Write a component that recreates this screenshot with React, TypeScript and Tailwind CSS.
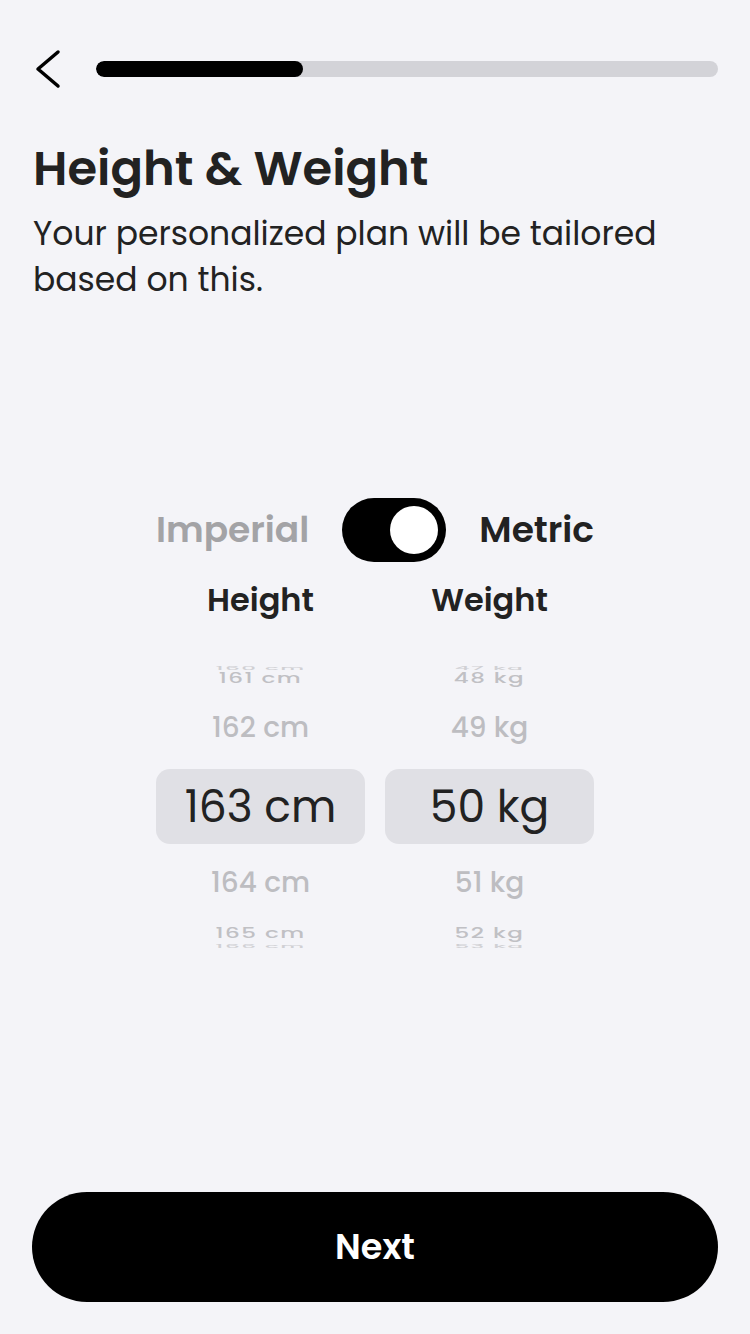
import React from "react";

const font = { fontFamily: "Poppins, 'Open Sans', sans-serif" };

function Wheel({ items }: { items: string[] }) {
  // items: [p0, r1, r2, sel, r4, r5, p6]
  return (
    <div className="flex w-[209px] flex-col items-stretch">
      <div className="flex h-[10px] items-end justify-center overflow-hidden">
        <span className="h-[4px] overflow-hidden">
          <span className="block scale-y-[0.2] text-[23px] font-medium leading-[4px] tracking-[1.5px] text-[#d0d0d4]">{items[0]}</span>
        </span>
      </div>
      <div className="flex h-[17px] items-center justify-center overflow-hidden">
        <span className="scale-y-[0.6] text-[23px] font-medium leading-none tracking-[1.5px] text-[#c0c0c4]">{items[1]}</span>
      </div>
      <div className="flex h-[82px] items-center justify-center">
        <span className="text-[28px] font-medium leading-none text-[#bdbdc1]">{items[2]}</span>
      </div>
      <div className="flex h-[75px] items-center justify-center rounded-[14px] bg-[#e0e0e5]">
        <span className="text-[44px] leading-none text-[#222222]">{items[3]}</span>
      </div>
      <div className="flex h-[78px] items-center justify-center">
        <span className="text-[28px] font-medium leading-none text-[#bdbdc1]">{items[4]}</span>
      </div>
      <div className="flex h-[22px] items-center justify-center overflow-hidden">
        <span className="scale-y-[0.6] text-[23px] font-medium leading-none tracking-[1.5px] text-[#c0c0c4]">{items[5]}</span>
      </div>
      <div className="flex h-[8px] items-start justify-center overflow-hidden">
        <span className="h-[4px] overflow-hidden">
          <span className="block scale-y-[0.2] text-[23px] font-medium leading-[4px] tracking-[1.5px] text-[#d0d0d4]">{items[6]}</span>
        </span>
      </div>
    </div>
  );
}

export default function App() {
  return (
    <div className="flex min-h-[1334px] w-[750px] flex-col bg-[#f4f4f8] text-[#222222]" style={font}>
      {/* header */}
      <div className="flex items-center pl-[35px] pr-[32px] pt-[49px]">
        <svg width="28" height="40" viewBox="0 0 28 40" className="shrink-0">
          <polyline points="23,3 3,20 23,37" fill="none" stroke="#000" strokeWidth="3.5" strokeLinecap="round" strokeLinejoin="round" />
        </svg>
        <div className="ml-[33px] h-[16px] flex-1 overflow-hidden rounded-full bg-[#d3d3d8]">
          <div className="h-full w-[207px] rounded-full bg-black" />
        </div>
      </div>

      {/* title */}
      <div className="px-[33px] pt-[52px]">
        <h1 className="text-[48px] font-semibold leading-[56px]">Height &amp; Weight</h1>
        <p className="mt-[14px] text-[33px] leading-[46px]">Your personalized plan will be tailored based on this.</p>
      </div>

      {/* toggle */}
      <div className="mt-[195px] flex items-center justify-center gap-[33px]">
        <span className="text-[36px] font-semibold text-[#a3a3a6]">Imperial</span>
        <div className="flex h-[64px] w-[104px] items-center justify-end rounded-full bg-black pr-[8px]">
          <div className="h-[48px] w-[48px] rounded-full bg-white" />
        </div>
        <span className="text-[36px] font-semibold">Metric</span>
      </div>

      {/* column labels */}
      <div className="mt-[14px] flex justify-center gap-[20px]">
        <div className="w-[209px] text-center text-[32px] font-semibold">Height</div>
        <div className="w-[209px] text-center text-[32px] font-semibold">Weight</div>
      </div>

      {/* wheels */}
      <div className="mt-[36px] flex justify-center gap-[20px]">
        <Wheel items={["160 cm", "161 cm", "162 cm", "163 cm", "164 cm", "165 cm", "166 cm"]} />
        <Wheel items={["47 kg", "48 kg", "49 kg", "50 kg", "51 kg", "52 kg", "53 kg"]} />
      </div>

      <div className="flex-1" />

      {/* next button */}
      <div className="px-[32px] pb-[32px]">
        <button className="flex h-[110px] w-full items-center justify-center rounded-full bg-black text-[35px] font-semibold text-white">
          Next
        </button>
      </div>
    </div>
  );
}
